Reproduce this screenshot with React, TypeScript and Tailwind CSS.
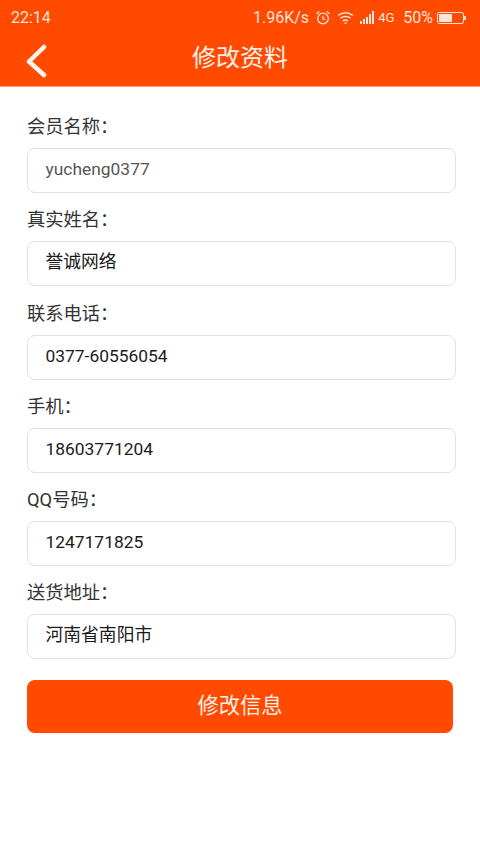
import React from 'react';

const fields = [
  { label: '会员名称：', value: 'yucheng0377', size: 'text-[17.4px]', color: 'text-[#555]' },
  { label: '真实姓名：', value: '誉诚网络', size: 'text-[17.8px]', color: 'text-[#1a1a1a]' },
  { label: '联系电话：', value: '0377-60556054', size: 'text-[17.4px]', color: 'text-[#1a1a1a]' },
  { label: '手机：', value: '18603771204', size: 'text-[17.4px]', color: 'text-[#1a1a1a]' },
  { label: 'QQ号码：', value: '1247171825', size: 'text-[17.4px]', color: 'text-[#1a1a1a]' },
  { label: '送货地址：', value: '河南省南阳市', size: 'text-[17.8px]', color: 'text-[#1a1a1a]' },
];

const StatusBar = () => (
  <div className="h-[35px] flex items-center pl-[11px] pr-[13px] text-[16px] text-[#ffe3d6] leading-none">
    <span>22:14</span>
    <div className="ml-auto flex items-center">
      <span className="text-[16px]">1.96K/s</span>
      <svg className="ml-[6px]" width="16" height="16" viewBox="0 0 15 15" fill="none" stroke="#ffe3d6" strokeWidth="1.2">
        <circle cx="7.5" cy="8" r="5" />
        <path d="M7.5 5.5V8.2L9.3 9.4M1.5 3.5L4 1.5M13.5 3.5L11 1.5" />
      </svg>
      <svg className="ml-[6px]" width="17" height="14" viewBox="0 0 17 14" fill="none" stroke="#ffe3d6" strokeWidth="1.5">
        <path d="M1 4.5C5.5 0.7 11.5 0.7 16 4.5M3.5 7.2C6.3 5 10.7 5 13.5 7.2M6 9.8C7.4 8.8 9.6 8.8 11 9.8" />
        <circle cx="8.5" cy="12" r="1" fill="#ffe3d6" stroke="none" />
      </svg>
      <svg className="ml-[6px]" width="16" height="13" viewBox="0 0 16 13" fill="#ffe3d6">
        <rect x="0" y="10" width="2" height="3" />
        <rect x="3" y="8" width="2" height="5" />
        <rect x="6" y="6" width="2" height="7" />
        <rect x="9" y="3" width="2" height="10" />
        <rect x="12" y="0" width="2" height="13" />
      </svg>
      <span className="ml-[2px] text-[13px]">4G</span>
      <span className="ml-[9px] text-[16px]">50%</span>
      <svg className="ml-[4px]" width="30" height="12" viewBox="0 0 30 12" fill="none">
        <rect x="0.5" y="0.5" width="26" height="11" rx="1.5" stroke="#ffe3d6" />
        <rect x="2" y="2" width="13" height="8" fill="#ffe3d6" />
        <rect x="27" y="4" width="2" height="4" fill="#ffe3d6" />
      </svg>
    </div>
  </div>
);

const App: React.FC = () => {
  return (
    <div className="w-[480px] h-[853px] bg-white overflow-hidden font-['Roboto','Noto_Sans_CJK_SC',sans-serif]">
      <div className="h-[87px] bg-[#ff4a00] border-b border-[#f3a27d]">
        <StatusBar />
        <div className="relative h-[46px] flex items-center justify-center">
          <svg className="absolute left-[26px] top-[9px]" width="22" height="34" viewBox="0 0 22 34" fill="none" stroke="#fff6f0" strokeWidth="4.5" strokeLinecap="round" strokeLinejoin="round">
            <path d="M18 3L3 17.5L18 31" />
          </svg>
          <span className="text-[24px] text-[#fff1ea] leading-none">修改资料</span>
        </div>
      </div>

      <div className="pl-[27px] pr-[24px] pt-[26px]">
        {fields.map((f) => (
          <div key={f.label} className="h-[93.3px]">
            <div className="h-[27px] text-[18.3px] leading-[27px] text-[#333]">{f.label}</div>
            <div className={`mt-[8px] h-[45px] border-[1.5px] border-[#e2e2e2] rounded-[8px] pl-[17.5px] pb-[3px] flex items-center ${f.size} ${f.color}`}>
              {f.value}
            </div>
          </div>
        ))}
        <button className="block w-[426px] h-[53px] mt-[7px] rounded-[8px] bg-[#ff4a00] text-[21.3px] text-[#fff1ea]">
          修改信息
        </button>
      </div>
    </div>
  );
};

export default App;
